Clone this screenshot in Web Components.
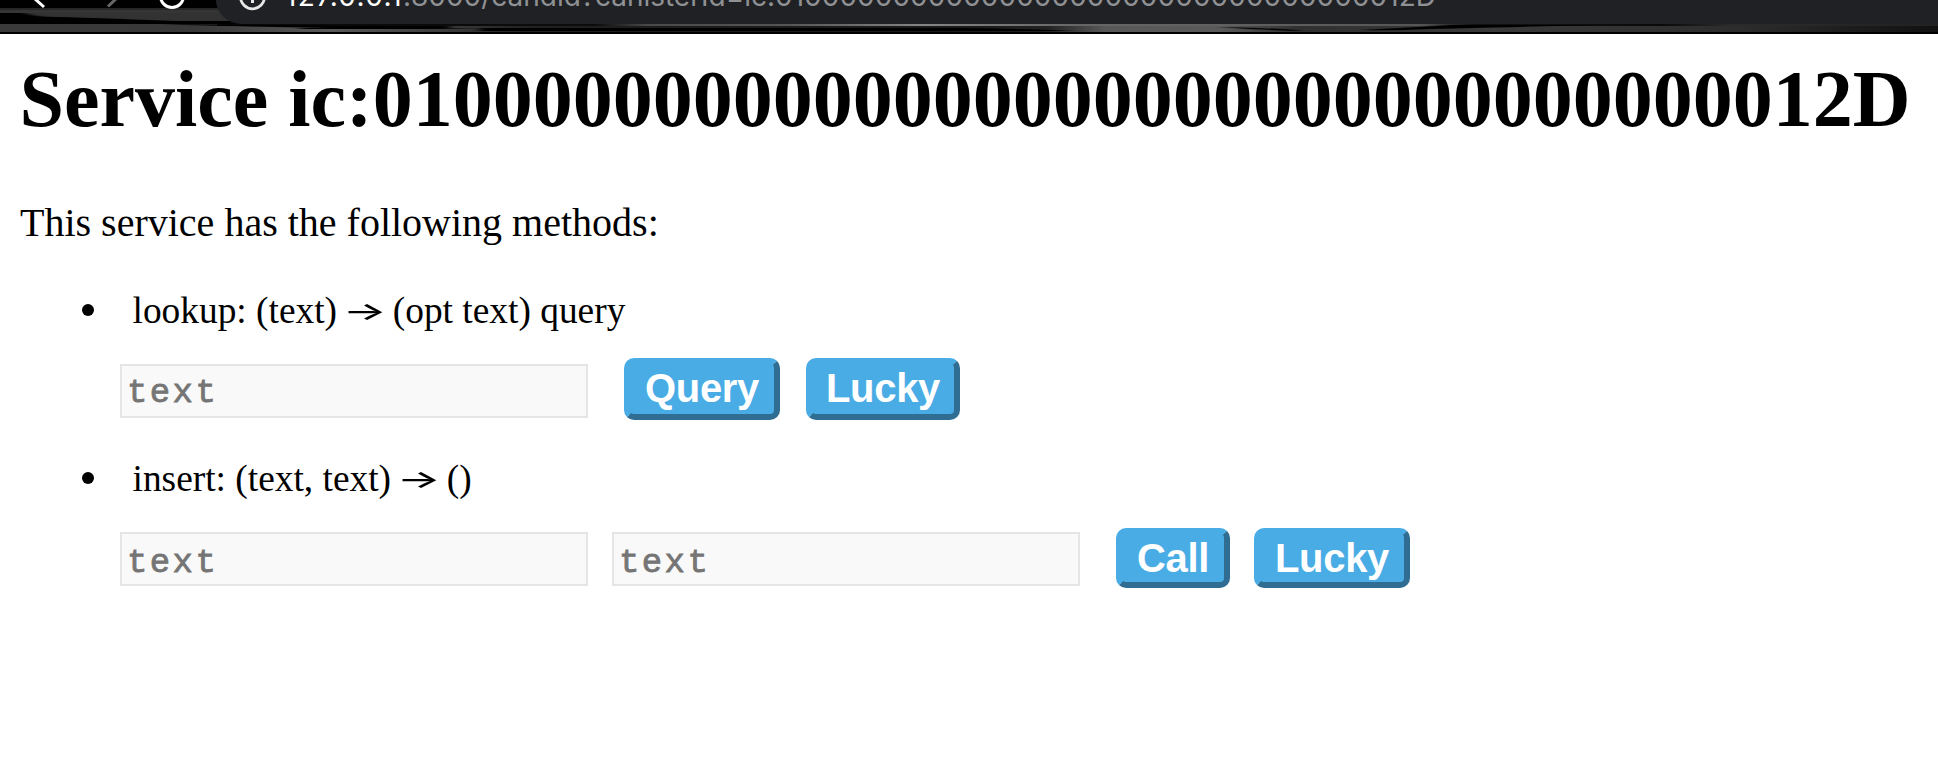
<!DOCTYPE html>
<html lang="en">
<head>
<meta charset="utf-8">
<title>Candid service</title>
<style>
html,body{margin:0;background:#fff;color:#000;font-family:"Liberation Serif",serif;overflow:hidden}
</style>
</head>
<body>
<candid-app></candid-app>
<script>
const define=(name,html,setup)=>customElements.define(name,class extends HTMLElement{
  connectedCallback(){
    if(this.shadowRoot)return;
    const t=document.createElement('template');
    t.innerHTML=html;
    this.attachShadow({mode:'open'}).append(t.content.cloneNode(true));
    if(setup)setup(this.shadowRoot);
  }
});

define('browser-bar',`<style>
:host{display:grid;height:34px;overflow:hidden;background:#000}
svg,.row{grid-area:1/1}
svg{display:block}
.row{display:flex;height:24px;position:relative}
.nav{width:216px;flex:none}
.pill{flex:1;background:#202125;border-bottom-left-radius:26px 24px;display:flex;overflow:hidden}
.info{flex:none;width:69px;height:24px}
.url{margin-top:-21px;height:34px;line-height:34px;font-size:28px;font-family:Inter,sans-serif;white-space:pre;color:#8f9194}
.url span{display:inline-block}
.url .host{color:#fff}
</style>
<svg width="1938" height="34" viewBox="0 0 1938 34">
<defs>
<linearGradient id="a"><stop offset="0" stop-color="#3a3a3a"/><stop offset=".1" stop-color="#383838"/><stop offset=".17" stop-color="#5a5a5a"/><stop offset=".23" stop-color="#3c3c3c"/><stop offset=".27" stop-color="#222"/><stop offset=".34" stop-color="#1c1c1c"/><stop offset=".5" stop-color="#1a1a1a"/><stop offset=".54" stop-color="#222"/><stop offset=".57" stop-color="#585858"/><stop offset=".63" stop-color="#5a5a5a"/><stop offset=".67" stop-color="#303030"/><stop offset=".77" stop-color="#3a3a3a"/><stop offset=".9" stop-color="#2c2c2c"/><stop offset="1" stop-color="#111"/></linearGradient>
<linearGradient id="b"><stop offset="0" stop-color="#080808"/><stop offset=".22" stop-color="#0c0c0c"/><stop offset=".25" stop-color="#4a4a4a"/><stop offset=".33" stop-color="#555"/><stop offset=".41" stop-color="#858585"/><stop offset=".5" stop-color="#666"/><stop offset=".64" stop-color="#5c5c5c"/><stop offset=".7" stop-color="#555"/><stop offset=".73" stop-color="#111"/><stop offset=".84" stop-color="#0a0a0a"/><stop offset=".88" stop-color="#2b2b2b"/><stop offset="1" stop-color="#222"/></linearGradient>
<filter id="s" x="-5%" y="-50%" width="110%" height="200%"><feGaussianBlur stdDeviation="4 .6"/></filter>
</defs>
<rect y="8" width="240" height="5" fill="#262626"/>
<rect y="10" width="240" height="3" fill="#353535"/>
<path d="M25 13H240V21H175Q100 18 60 17Q35 17 25 13" fill="#333" filter="url(#s)"/>
<rect y="24" width="1938" height="8" fill="url(#a)"/>
<rect x="217" y="24" width="1721" height="2" fill="url(#b)"/>
<path d="M160 24Q270 25 350 26H450V28H330Q250 27 160 24M300 28Q380 26 480 29H300M480 28H960Q1040 29 1075 31H480M1220 27Q1300 29 1300 31Q1240 29 1220 27M1360 30Q1420 27 1450 25H1600Q1510 27 1430 29Q1390 31 1360 30" fill="#000" filter="url(#s)"/>
<path d="M30 -5.500L44 7" stroke="#fff" stroke-width="3" fill="none"/>
<path d="M119 -4L108 6.500" stroke="#666" stroke-width="3" fill="none"/>
<circle cx="172" cy="-4" r="11.500" fill="none" stroke="#fff" stroke-width="3"/>
</svg>
<div class="row"><div class="nav"></div><div class="pill">
<svg class="info" viewBox="0 0 69 24"><circle cx="36.500" cy="-3.200" r="12" fill="none" stroke="#e8e8e8" stroke-width="2.800"/><path d="M36.500 -5V3" stroke="#e8e8e8" stroke-width="3"/></svg>
<div class="url"><span class="host" data-w="118">127.0.0.1</span><span data-w="372">:8000/candid?canisterId=ic:</span><span data-w="661">0100000000000000000000000000000000012D</span></div>
</div></div>`,root=>{
  // Track each address segment out to its column width.
  for(const s of root.querySelectorAll('[data-w]')){
    const w=+s.dataset.w;
    s.style.letterSpacing=(w-s.getBoundingClientRect().width)/s.textContent.length+'px';
    s.style.width=w+'px';
  }
});

define('type-arrow',`<style>
:host{display:inline-flex;width:37px;justify-content:center;align-items:center;height:20px;vertical-align:3.500px}
span{font:500 25px/20px Inter,sans-serif;white-space:nowrap;transform:scaleX(1.85)}
</style><span>→</span>`);

define('text-field',`<style>
:host{display:block;flex:none;width:468px;height:54px;box-sizing:border-box}
input{display:block;box-sizing:border-box;width:100%;height:100%;margin:0;border:2px solid #e5e5e5;border-radius:0;background:#f9f9f9;padding:var(--drop,4px) 4px 0 5px;font:34px/40px "Liberation Mono",monospace;letter-spacing:2.400px;outline:0}
input::placeholder{color:#757575;opacity:1;-webkit-text-stroke:.8px #757575}
</style><input type="text" placeholder="text">`);

define('action-button',`<style>
:host{display:block;flex:none;height:var(--h,62px)}
button{display:block;box-sizing:border-box;width:100%;height:100%;margin:0;border:6px solid;border-color:#4aace5 #2f6d92 #2f6d92 #4aace5;border-radius:10px;background:#4aace5;color:#fff;font:bold 40px/46px "Liberation Sans",sans-serif;letter-spacing:-.300px;padding:0 0 var(--lift,2px);text-align:center;white-space:nowrap}
</style><button><slot></slot></button>`);

define('service-method',`<style>
:host{display:block}
.sig{display:flex;align-items:center;height:42px;font-size:37.400px;line-height:42px;padding-left:82px}
.dot{width:12px;height:12px;border-radius:50%;background:#000;margin-right:38.500px}
.sig div{white-space:pre;padding-top:1px;height:41px}
.row{display:flex;padding-left:120px}
</style>
<div class="sig"><i class="dot"></i><div><slot name="sig"></slot></div></div>
<div class="row"><slot></slot></div>`);

define('candid-app',`<style>
:host{display:block;width:1938px;height:774px;background:#fff}
main{padding-top:19px}
h1{margin:0 0 0 19.500px;font-size:80px;line-height:92px;white-space:nowrap}
p{margin:55px 0 0 20px;font-size:40px;line-height:46px}
.m1{margin-top:43px}.m2{margin-top:37px}
.m1 text-field{margin-top:33px}.m1 action-button{margin-top:27px}
.m2 text-field{margin-top:33px;--drop:8px}.m2 action-button{margin-top:29px;--h:60px;--lift:0px}
</style>
<browser-bar></browser-bar>
<main>
<h1>Service ic:0100000000000000000000000000000000012D</h1>
<p>This service has the following methods:</p>
<service-method class="m1"><span slot="sig">lookup: (text) <type-arrow></type-arrow> (opt text) query</span>
<text-field></text-field>
<action-button style="width:156px;margin-left:36px">Query</action-button>
<action-button style="width:154px;margin-left:26px">Lucky</action-button></service-method>
<service-method class="m2"><span slot="sig">insert: (text, text) <type-arrow></type-arrow> ()</span>
<text-field></text-field>
<text-field style="margin-left:24px"></text-field>
<action-button style="width:114px;margin-left:36px">Call</action-button>
<action-button style="width:156px;margin-left:24px">Lucky</action-button></service-method>
</main>`);
</script>
</body>
</html>
